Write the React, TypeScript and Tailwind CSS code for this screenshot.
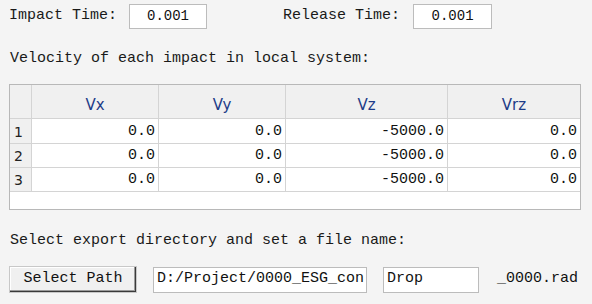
import React from "react";

const rows = [
  { n: "1", vx: "0.0", vy: "0.0", vz: "-5000.0", vrz: "0.0" },
  { n: "2", vx: "0.0", vy: "0.0", vz: "-5000.0", vrz: "0.0" },
  { n: "3", vx: "0.0", vy: "0.0", vz: "-5000.0", vrz: "0.0" },
];

const mono = "font-['Liberation_Mono',monospace]";

// one value cell in the grid, right aligned like the Qt table
const Cell = ({ w, children, last }: { w: string; children: React.ReactNode; last?: boolean }) => (
  <div
    className={`${w} h-full flex items-center justify-end pr-[3px] pt-[2px] text-[15px] text-[#111] ${
      last ? "" : "border-r border-[#d4d4d4]"
    }`}
  >
    {children}
  </div>
);

export default function App() {
  return (
    <div className={`w-[592px] h-[304px] bg-[#f4f4f4] ${mono} text-[15px] text-[#1a1a1a] overflow-hidden`}>
      {/* times */}
      <div className="flex items-center pt-[4px] h-[29px] pl-[9px]">
        <span>Impact Time:</span>
        <div className="ml-[12px] w-[78px] h-[25px] bg-white border border-[#bcbcbc] flex items-center justify-center text-[14px] text-[#111]">
          0.001
        </div>
        <span className="ml-[76px]">Release Time:</span>
        <div className="ml-[13px] w-[79px] h-[25px] bg-white border border-[#bcbcbc] flex items-center justify-center text-[14px] text-[#111]">
          0.001
        </div>
      </div>

      <div className="pl-[10px] mt-[21px] leading-[18px]">Velocity of each impact in local system:</div>

      {/* velocity table */}
      <div className="ml-[9px] mt-[16px] w-[572px] h-[126px] bg-white border border-[#b8b8b8] flex flex-col">
        <div className="h-[34px] flex bg-[#f0f0f0] border-b border-[#d4d4d4] font-['DejaVu_Sans',sans-serif] text-[15px] text-[#1d3c88]">
          <div className="w-[22px] border-r border-[#d4d4d4]" />
          <div className="w-[127px] border-r border-[#d4d4d4] flex items-center justify-center pt-[8px]">Vx</div>
          <div className="w-[127px] border-r border-[#d4d4d4] flex items-center justify-center pt-[8px]">Vy</div>
          <div className="w-[162px] border-r border-[#d4d4d4] flex items-center justify-center pt-[8px]">Vz</div>
          <div className="flex-1 flex items-center justify-center pt-[8px]">Vrz</div>
        </div>
        {rows.map((r, i) => (
          <div
            key={r.n}
            className={`${i === 0 ? "h-[25px]" : "h-[24px]"} flex border-b border-[#d4d4d4]`}
          >
            <div className="w-[22px] h-full bg-[#f0f0f0] border-r border-[#d4d4d4] flex items-center pl-[4px] pt-[2px] font-['DejaVu_Sans',sans-serif] text-[14px] text-[#222]">
              {r.n}
            </div>
            <Cell w="w-[127px]">{r.vx}</Cell>
            <Cell w="w-[127px]">{r.vy}</Cell>
            <Cell w="w-[162px]">{r.vz}</Cell>
            <Cell w="flex-1" last>
              {r.vrz}
            </Cell>
          </div>
        ))}
      </div>

      <div className="pl-[10px] mt-[22px] leading-[18px]">Select export directory and set a file name:</div>

      {/* export row */}
      <div className="flex items-center pl-[9px] mt-[16px]">
        <button className="w-[128px] h-[27px] bg-[#f0f0f0] border border-[#c8c8c8] shadow-[inset_-1px_-1px_0_#3a3a3a,inset_-2px_-2px_0_#9a9a9a,inset_1px_1px_0_#ffffff] flex items-center justify-center pb-[1px] text-[#111]">
          Select Path
        </button>
        <div className="ml-[16px] w-[214px] h-[26px] bg-white border border-[#bcbcbc] flex items-center pl-[3px] overflow-hidden whitespace-nowrap text-[#111]">
          D:/Project/0000_ESG_con
        </div>
        <div className="ml-[16px] w-[96px] h-[26px] bg-white border border-[#bcbcbc] flex items-center pl-[3px] text-[#111]">
          Drop
        </div>
        <span className="ml-[18px] text-[#111]">_0000.rad</span>
      </div>
    </div>
  );
}
